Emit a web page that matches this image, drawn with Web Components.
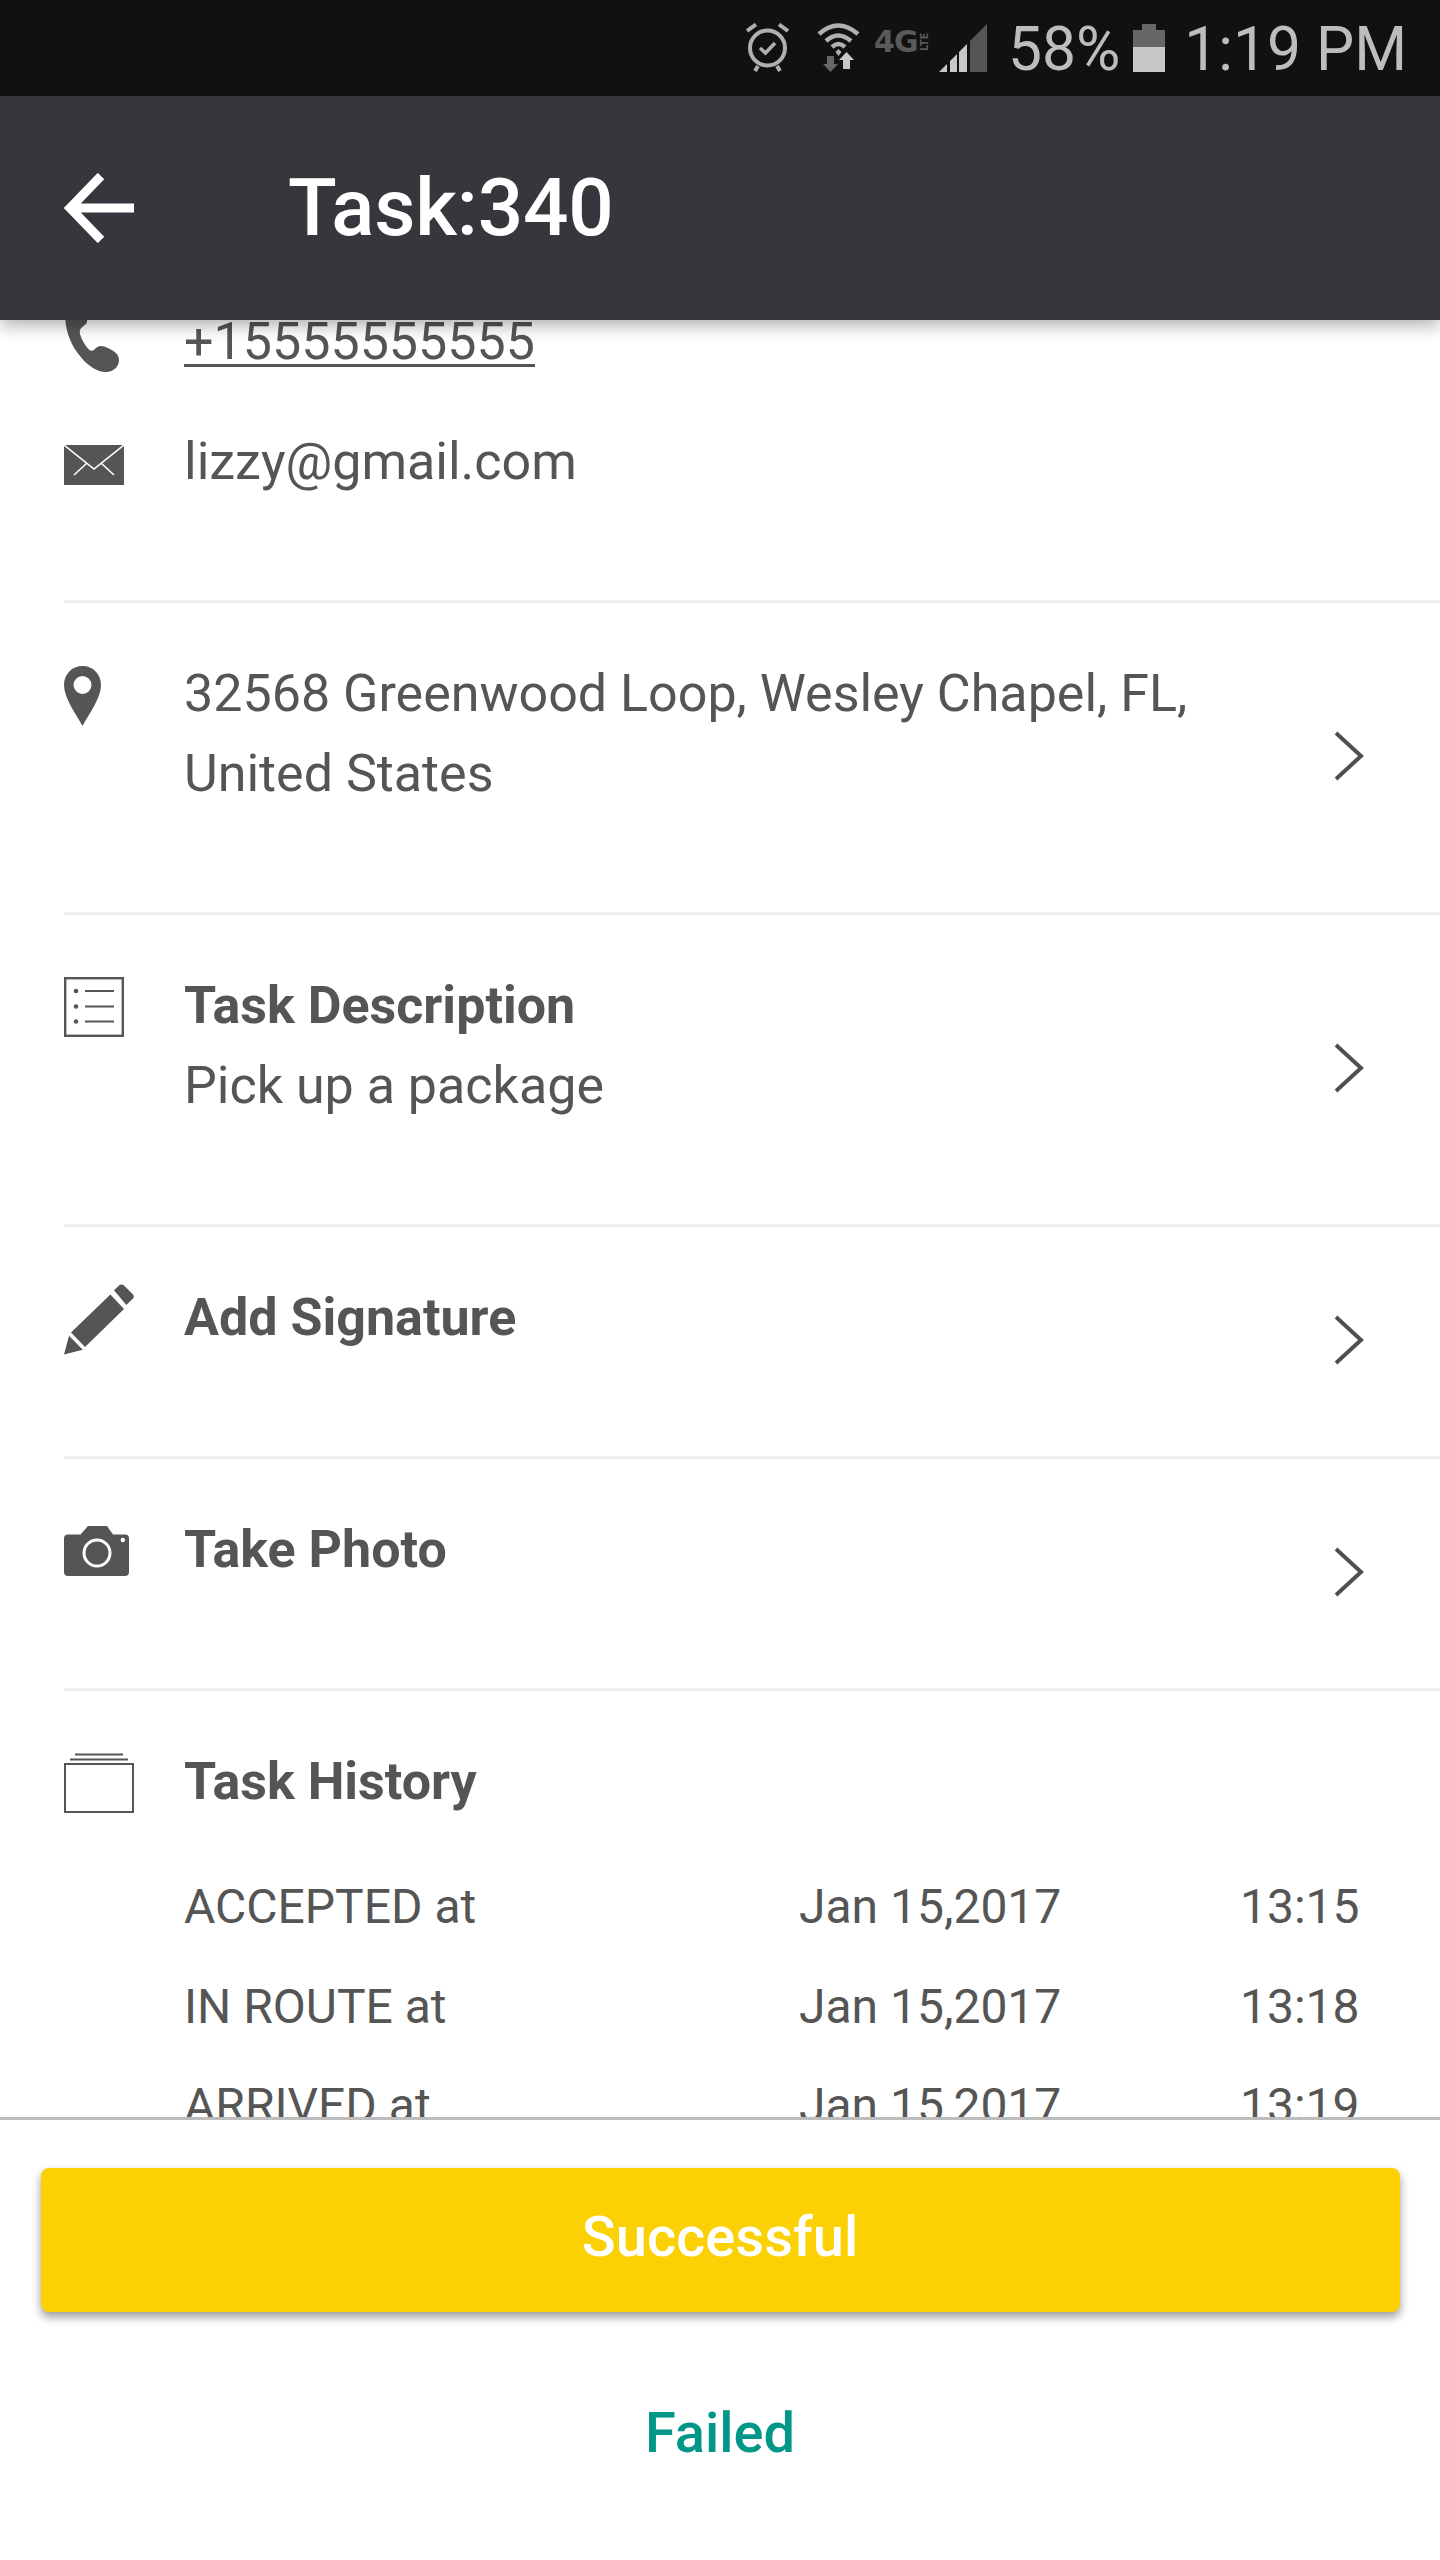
<!DOCTYPE html>
<html><head><meta charset="utf-8">
<style>
html,body{margin:0;padding:0;background:#fff}
body{width:1440px;height:2560px;overflow:hidden;font-family:Roboto,"Liberation Sans",sans-serif;color:#555}
</style></head><body>
<task-screen>
  <status-bar slot="status"></status-bar>
  <app-header slot="header"></app-header>
  <detail-row slot="content" icon="phone" compact><a-link>+15555555555</a-link></detail-row>
  <detail-row slot="content" icon="mail" compact last>lizzy@gmail.com</detail-row>
  <detail-row slot="content" icon="pin" divider chevron>32568 Greenwood Loop, Wesley Chapel, FL, United States</detail-row>
  <detail-row slot="content" icon="list" divider chevron><b>Task Description</b><br>Pick up a package</detail-row>
  <detail-row slot="content" icon="pencil" divider chevron><b>Add Signature</b></detail-row>
  <detail-row slot="content" icon="camera" divider chevron><b>Take Photo</b></detail-row>
  <history-section slot="content">
    <history-row label="ACCEPTED at" date="Jan 15,2017" time="13:15"></history-row>
    <history-row label="IN ROUTE at" date="Jan 15,2017" time="13:18"></history-row>
    <history-row label="ARRIVED at" date="Jan 15,2017" time="13:19"></history-row>
  </history-section>
  <action-bar slot="actions"></action-bar>
</task-screen>
<script>
const ICONS={
phone:'<svg width="56" height="74" viewBox="0 0 56 74" style="margin-top:-2px"><path fill="#555" d="M2 6C-1 22 4 42 16 56C22 64 32 72 42 72C50 72 55 66 55 60C55 54 50 51 44 48C38 45 34 45 30 50C27 52 25 50 22 46C18 40 15 34 16 30C17 27 20 26 22 24C25 20 22 12 18 6C14 0 4-2 2 6Z"/></svg>',
mail:'<svg width="60" height="40" viewBox="0 0 60 40" style="margin-top:23px"><rect width="60" height="40" fill="#555"/><path d="M0 0L30 24L60 0M10 30L23 18M50 30L37 18" fill="none" stroke="#fff" stroke-width="1.6"/></svg>',
pin:'<svg width="37" height="60" viewBox="0 0 37 60" style="margin-top:12px"><path fill="#555" fill-rule="evenodd" d="M18.5 0C8 0 0 8 0 19C0 32 12 48 18.5 60C25 48 37 32 37 19C37 8 29 0 18.5 0ZM18.5 10A9 9 0 1 1 18.5 28A9 9 0 1 1 18.5 10Z"/></svg>',
list:'<svg width="60" height="60" viewBox="0 0 60 60" style="margin-top:11px"><rect x="1.2" y="1.2" width="57.6" height="57.6" fill="none" stroke="#555" stroke-width="2.4"/><g fill="#555"><circle cx="12" cy="14" r="2.3"/><circle cx="12" cy="29.5" r="2.3"/><circle cx="12" cy="44.5" r="2.3"/></g><path d="M21 14H50M21 29.5H50M21 44.5H50" stroke="#555" stroke-width="2"/></svg>',
pencil:'<svg width="70" height="71" viewBox="0 0 70 71" style="margin-top:6px"><g fill="#555"><path d="M0 70.5L5 51.8L18.8 65.7Z"/><path d="M7 48.6L21 63.1L60 25L46.4 10.5Z"/><path d="M50 6.3L55 1.5Q57 0 59.5 1L69 10.5Q70.5 12.5 69 14.5L62.4 21Z"/></g></svg>',
camera:'<svg width="65" height="50" viewBox="0 0 65 50" style="margin-top:16px"><path fill="#555" d="M4 8.5H16.5L24 0H43L49 8.5H61Q65 8.5 65 12.5V46Q65 50 61 50H4Q0 50 0 46V12.5Q0 8.5 4 8.5Z"/><circle cx="33" cy="27" r="13" fill="none" stroke="#fff" stroke-width="3"/><circle cx="58.8" cy="14" r="2.2" fill="#fff"/></svg>'
};
const HISTORY_ICON='<svg width="70" height="60" viewBox="0 0 70 60" style="display:block;margin-top:11px"><rect x="1" y="11" width="68" height="48" fill="none" stroke="#555" stroke-width="2"/><path d="M6 6.5H64M11 1.5H59" stroke="#555" stroke-width="2"/></svg>';

class Base extends HTMLElement{
  constructor(html){super();this.attachShadow({mode:'open'}).innerHTML=html;}
}
customElements.define('task-screen',class extends Base{constructor(){super(`<style>
:host{display:flex;flex-direction:column;width:1440px;height:2560px;background:#fff}
.head{position:relative;z-index:2;flex:none}
.content{flex:none;height:1797px;overflow:hidden}
.inner{margin-top:-18px}
.actions{flex:1;border-top:3px solid #bdbdbd}
</style>
<div class="head"><slot name="status"></slot><slot name="header"></slot></div>
<div class="content"><div class="inner"><slot name="content"></slot></div></div>
<div class="actions"><slot name="actions"></slot></div>`);}});

customElements.define('status-bar',class extends Base{constructor(){super(`<style>
:host{display:flex;align-items:center;height:96px;background:#111;box-sizing:border-box;padding-right:33px;justify-content:flex-end;color:#bdbdbd;font:400 60.5px/96px Roboto,sans-serif}
svg{display:block;flex:none}
.t{margin-top:3px;white-space:nowrap}
.net{display:flex;justify-content:space-between;align-items:flex-start;width:55px;height:24px;margin:-12px 10px 0 0;color:#5a5a5a;font:700 30px/24px "DejaVu Sans",sans-serif;letter-spacing:-1px;white-space:nowrap}
.lte{writing-mode:vertical-rl;transform:rotate(180deg);font-size:10px;line-height:9px;letter-spacing:0;height:23px;text-align:center}
</style>
<svg width="44" height="50" viewBox="0 0 44 50" style="margin-right:27px"><g fill="none" stroke="#b0b0b0"><circle cx="21.5" cy="25" r="17.5" stroke-width="4"/><path d="M14 25L19.5 30L29 20" stroke-width="3.5"/><path d="M1 8L10 1.5M33 1.5L42 8" stroke-width="4"/><path d="M12 43L9 48M31 43L34 48" stroke-width="4"/></g></svg>
<svg width="43" height="50" viewBox="0 0 43 50" style="margin-right:14px"><g fill="none" stroke="#b0b0b0" stroke-width="4.5"><path d="M2 11Q21-6 41 11"/><path d="M9 18Q21 7 34 18"/><path d="M15 24Q21.5 18 28 24"/></g><path d="M18.5 29L21.5 26L24.5 29L21.5 33Z" fill="#b0b0b0"/><path d="M10 33H17V41H21L13.5 49L6 41H10Z" fill="#666"/><path d="M26 46V37H22L29.5 29L37 37H33V46Z" fill="#c8c8c8"/></svg>
<div class="net"><span>4G</span><span class="lte">LTE</span></div>
<svg width="48" height="48" viewBox="0 0 48 48" style="margin-right:21px"><path d="M0 48L8 40V48ZM11 48V37L18 30V48ZM20 48V28L28 20V48Z" fill="#c8c8c8"/><path d="M31 48V17L48 0V48Z" fill="#555"/></svg>
<span class="t" style="margin-right:13px">58%</span>
<svg width="32" height="48" viewBox="0 0 32 48" style="margin-right:19px"><path d="M9 0H23V6H32V23H0V6H9Z" fill="#666"/><rect y="23" width="32" height="25" fill="#c8c8c8"/></svg>
<span class="t">1:19 PM</span>`);}});

customElements.define('app-header',class extends Base{constructor(){super(`<style>
:host{display:flex;align-items:center;height:224px;background:#39353c;color:#fff;box-shadow:0 6px 16px rgba(0,0,0,.3);font:500 80px/1 Roboto,sans-serif;letter-spacing:-.2px}
svg{margin-left:64px;margin-right:154px;flex:none}
</style><svg width="70" height="70" viewBox="0 0 70 70"><path d="M70 35H6M37 3L6 35L37 67" fill="none" stroke="#fff" stroke-width="9"/></svg><span>Task:340</span>`);}});

customElements.define('a-link',class extends Base{constructor(){super(`<style>:host{text-decoration:underline;text-decoration-thickness:3px;text-underline-offset:5px}</style><slot></slot>`);}});

customElements.define('detail-row',class extends Base{constructor(){super(`<style>
:host{display:block;margin-left:64px;font:400 52px/80px Roboto,sans-serif;color:#555}
:host([divider]){border-top:3px solid #eee}
.r{display:flex;align-items:flex-start}
.i{flex:none;width:120px;height:80px;padding-top:51px}
.i svg{display:block}
.t{flex:none;width:1010px;padding:51px 0 98px}
:host([compact]) .i{padding-top:0}
:host([compact]) .t{padding:0 0 40px}
:host([last]) .t{padding-bottom:98px}
::slotted(b){font-weight:700}
.c{display:block;align-self:center;margin:0 76px 3px auto;flex:none}
</style><div class="r"><div class="i"></div><div class="t"><slot></slot></div></div>`);}
connectedCallback(){
 const s=this.shadowRoot;
 s.querySelector('.i').innerHTML=ICONS[this.getAttribute('icon')]||'';
 if(this.hasAttribute('chevron')&&!s.querySelector('.c')){
  s.querySelector('.r').insertAdjacentHTML('beforeend','<svg class="c" width="30" height="50" viewBox="0 0 30 50"><path d="M2 2L27 25L2 48" fill="none" stroke="#505050" stroke-width="4"/></svg>');
 }
}});

customElements.define('history-section',class extends Base{constructor(){super(`<style>
:host{display:block;margin-left:64px;border-top:3px solid #eee;font:400 52px/80px Roboto,sans-serif;color:#555}
.h{display:flex;padding-top:51px;margin-bottom:45px}
.i{width:120px;flex:none}
b{font-weight:700}
.l{padding-left:120px;display:flex;flex-direction:column;gap:19.5px}
</style><div class="h"><div class="i">${HISTORY_ICON}</div><b>Task History</b></div><div class="l"><slot></slot></div>`);}});

customElements.define('history-row',class extends Base{constructor(){super(`<style>
:host{display:grid;grid-template-columns:615px 441px 1fr;font:400 48px/80px Roboto,sans-serif;color:#555;white-space:nowrap}
</style><span class="a"></span><span class="b"></span><span class="c"></span>`);}
connectedCallback(){const s=this.shadowRoot;s.querySelector('.a').textContent=this.getAttribute('label');s.querySelector('.b').textContent=this.getAttribute('date');s.querySelector('.c').textContent=this.getAttribute('time');}});

customElements.define('action-bar',class extends Base{constructor(){super(`<style>
:host{display:flex;flex-direction:column;align-items:center;font:500 56px/1 Roboto,sans-serif}
.ok{margin-top:48px;width:1359px;height:144px;box-sizing:border-box;padding-bottom:6px;background:#fbd106;border-radius:8px;color:#fff;display:flex;align-items:center;justify-content:center;box-shadow:0 5px 10px rgba(0,0,0,.4)}
.no{margin-top:81px;color:#009688;height:80px;line-height:80px}
</style><div class="ok">Successful</div><div class="no">Failed</div>`);}});
</script>
</body></html>
